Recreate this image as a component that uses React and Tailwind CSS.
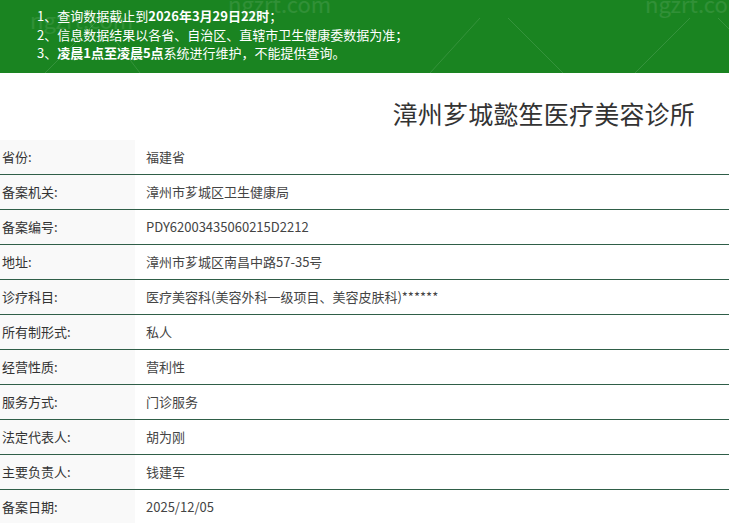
const rows = [
  ["省份:", "福建省"],
  ["备案机关:", "漳州市芗城区卫生健康局"],
  ["备案编号:", "PDY62003435060215D2212"],
  ["地址:", "漳州市芗城区南昌中路57-35号"],
  ["诊疗科目:", "医疗美容科(美容外科一级项目、美容皮肤科)******"],
  ["所有制形式:", "私人"],
  ["经营性质:", "营利性"],
  ["服务方式:", "门诊服务"],
  ["法定代表人:", "胡为刚"],
  ["主要负责人:", "钱建军"],
  ["备案日期:", "2025/12/05"],
];

export default function App() {
  return (
    <div className="w-[729px] h-[523px] overflow-hidden bg-white text-[#333] font-['Microsoft_YaHei','Noto_Sans_CJK_SC',sans-serif]">
      {/* notice banner */}
      <div className="relative h-[73px] bg-[#1a8421] pt-[7px] pl-[37px] text-[13px] leading-[18.5px] text-white overflow-hidden">
        <span className="absolute left-[30px] top-[8px] text-[22px] leading-none text-white/10 select-none">ngzrt.com</span>
        <span className="absolute left-[228px] top-[-8px] text-[22px] leading-none text-white/10 select-none">ngzrt.com</span>
        <span className="absolute left-[645px] top-[-8px] text-[22px] leading-none text-white/10 select-none">ngzrt.com</span>
        <svg className="absolute left-0 top-0 pointer-events-none" width="729" height="73">
          <g stroke="rgba(255,255,255,0.12)" strokeWidth="1">
            <line x1="45" y1="73" x2="100" y2="18" />
            <line x1="430" y1="73" x2="480" y2="18" />
            <line x1="508" y1="18" x2="563" y2="73" />
            <line x1="635" y1="73" x2="690" y2="18" />
            <line x1="718" y1="18" x2="729" y2="29" />
            <line x1="115" y1="40" x2="140" y2="73" />
          </g>
        </svg>
        <div className="relative">
          <p>1、查询数据截止到<b>2026年3月29日22时</b>；</p>
          <p>2、信息数据结果以各省、自治区、直辖市卫生健康委数据为准；</p>
          <p>3、<b>凌晨1点至凌晨5点</b>系统进行维护，不能提供查询。</p>
        </div>
      </div>

      {/* title */}
      <div className="h-[67px] flex items-center justify-end pr-[34px] pt-[13px]">
        <h1 className="text-[25px] leading-none tracking-[0.2px] text-[#333]">漳州芗城懿笙医疗美容诊所</h1>
      </div>

      {/* details */}
      <div className="text-[13px]">
        {rows.map(([k, v]) => (
          <div key={k} className="flex h-[35px] border-b border-[#2f5e48]">
            <div className="w-[135px] shrink-0 bg-[#f9f9f9] pl-[2px] flex items-center">{k}</div>
            <div className="pl-[11px] flex items-center text-[#444]">{v}</div>
          </div>
        ))}
      </div>
    </div>
  );
}
